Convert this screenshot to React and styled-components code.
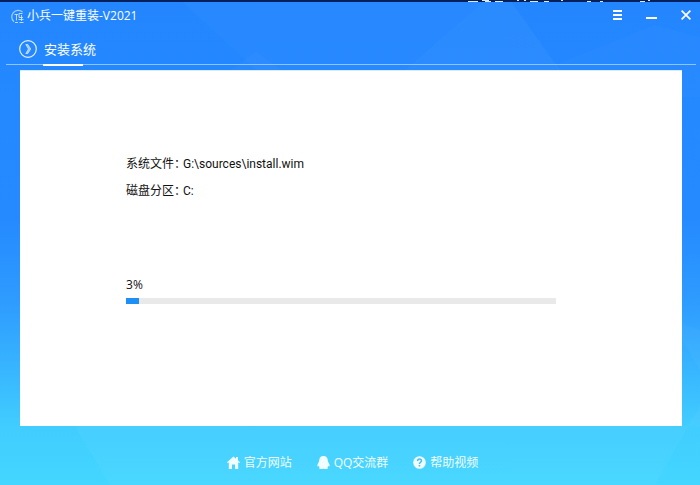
import React from 'react';
import styled, { createGlobalStyle } from 'styled-components';

const GlobalStyle = createGlobalStyle`
  * { box-sizing: border-box; }
  body {
    margin: 0;
    font-family: "Open Sans", "Noto Sans", "Noto Sans CJK SC", sans-serif;
    font-size: 12px;
    color: #111;
  }
`;

const Window = styled.div`
  position: relative;
  isolation: isolate;
  min-height: 100vh;
  display: flex;
  flex-direction: column;
  background: linear-gradient(#2386ff 0%, #258aff 45%, #2e9bff 62%, #36b1ff 74%, #41cdff 88%, #44d6ff 100%);
`;

const Facets = styled.svg`
  position: absolute;
  inset: 0;
  z-index: -1;
  width: 100%;
  height: 100%;
`;

const DesktopEdge = styled.div`
  height: 2px;
  background: #03205c;
  overflow: hidden;
  display: flex;
  justify-content: flex-end;
  padding-right: 44px;
`;

const TitleBar = styled.header`
  height: 28px;
  display: flex;
  align-items: center;
  padding: 0 4px 0 10px;
  color: #fff;
`;

const AppTitle = styled.h1`
  flex: 1;
  margin: 0 0 0 2px;
  font-size: 12px;
  font-weight: 400;
  line-height: 18px;
`;

const Controls = styled.div`
  display: flex;
  gap: 14px;
  padding-bottom: 2px;
`;

const WindowButton = styled.button`
  width: 20px;
  height: 20px;
  padding: 0;
  border: 0;
  background: none;
  color: inherit;
  display: grid;
  place-items: center;
`;

const SectionBar = styled.div`
  display: flex;
  height: 35px;
  margin: 0 4px 0 6px;
  padding-left: 13px;
  border-bottom: 1px solid #8fc5ff;
  color: #fff;
`;

const SectionIcon = styled.svg`
  margin: 10px 6px 0 0;
`;

const SectionTitle = styled.h2`
  margin: 0;
  font-size: 13px;
  font-weight: 400;
  line-height: 20px;
  padding: 9px 0 0 1px;
  height: 36px;
  background: linear-gradient(#fff, #fff) left bottom / 40px 2px no-repeat;
`;

const Panel = styled.main`
  flex: 1;
  margin: 5px 18px 0 20px;
  padding: 83px 126px 0 106px;
  background: #fff;
  border-top: 1px solid #d8ebff;
`;

const Details = styled.dl`
  margin: 0;
  display: grid;
  row-gap: 7px;
`;

const Detail = styled.div`
  display: flex;
  align-items: baseline;
  line-height: 20px;
`;

const Term = styled.dt`
  width: 57px;
  white-space: nowrap;
  font-feature-settings: "halt";
`;

const Value = styled.dd`
  margin: 0;
  font-family: Roboto, "Noto Sans CJK SC", sans-serif;
`;

const Progress = styled.section`
  margin-top: 74px;
`;

const Percent = styled.label`
  display: block;
  line-height: 20px;
`;

const Bar = styled.progress`
  appearance: none;
  display: block;
  width: 100%;
  height: 6px;
  margin-top: 3px;
  border: 0;
  background: #e9e9e9;
  &::-webkit-progress-bar { background: #e9e9e9; }
  &::-webkit-progress-value { background: #1e90f5; }
`;

const Footer = styled.footer`
  height: 59px;
  display: flex;
  justify-content: center;
  align-items: center;
  gap: 25px;
  padding: 14px 0 0 5px;
`;

const FooterLink = styled.a`
  display: flex;
  align-items: center;
  gap: 4px;
  color: #f2fdff;
  font-size: 12px;
  line-height: 18px;
  text-decoration: none;
  white-space: nowrap;
`;

const HomeIcon = () => (
  <svg width="13" height="13" viewBox="0 0 13 13" fill="currentColor" aria-hidden="true">
    <path d="M6.500 .5 0 6.200l.7.900 1.100-.8V13H5V8.500h3V13h3.200V6.300l1.100.8.7-.9-2-1.800V1H9v1.700z" />
  </svg>
);

const PenguinIcon = () => (
  <svg width="13" height="13" viewBox="0 0 13 13" fill="currentColor" aria-hidden="true">
    <path d="M6.500 0C3.700 0 2.200 1.900 2.200 4.600c0 .9-.4 1.500-1 2.300C.3 8.300.1 10.300.7 10.500c.4.100.8-.2 1.100-.7.2.7.500 1.200.9 1.500-.6.300-.8.600-.7 1 .4.900 3.700.9 4.500.1.800.8 4.100.8 4.500-.1.100-.4-.1-.7-.7-1 .4-.3.700-.8.9-1.500.3.500.7.800 1.100.7.600-.2.400-2.200-.5-3.600-.6-.8-1-1.400-1-2.300C10.800 1.900 9.300 0 6.500 0z" />
  </svg>
);

const HelpIcon = () => (
  <svg width="13" height="13" viewBox="0 0 13 13" fill="none" aria-hidden="true">
    <circle cx="6.500" cy="6.500" r="6.300" fill="currentColor" />
    <path d="M4.600 5C4.600 2.500 8.500 2.500 8.500 4.800 8.500 6.200 6.500 6.300 6.500 7.900M6.500 9v1.400" stroke="#3dbef5" strokeWidth="1.500" />
  </svg>
);

const Logo = () => (
  <svg width="15" height="15" viewBox="0 0 15 15" fill="none" stroke="#d3e7ff" aria-hidden="true">
    <path d="M12.500 3A6.300 6.300 0 1 0 4 12.800" strokeWidth="1.200" opacity=".75" />
    <path d="M4.500 5.500h3.500M6.500 5.500v6M9 4.500h3.500M9 4.500v4h4M11.500 6v6M8.500 10.500h5M5 13.500h3M9.500 13.500h4" opacity=".85" />
  </svg>
);

const links = [
  { label: '官方网站', Icon: HomeIcon },
  { label: 'QQ交流群', Icon: PenguinIcon },
  { label: '帮助视频', Icon: HelpIcon },
];

const percent = 3;

export default function App() {
  return (
    <Window>
      <GlobalStyle />
      <Facets viewBox="0 0 700 485" preserveAspectRatio="none" aria-hidden="true">
        <g fill="#fff">
          <path opacity=".035" d="M485 0 405 70h155L510 0z" />
          <path opacity=".02" d="M180 0h305L405 70H256z" />
          <path opacity=".025" d="m256 52-40 28h80z" />
          <path opacity=".02" d="m555 65 100-40 45 12v60h-130z" />
          <path opacity=".03" d="M700 330v40l-30-50zM75 426l35 59h545l45-80v21z" />
        </g>
      </Facets>
      <DesktopEdge>
        <svg width="190" height="2" viewBox="0 0 190 2" stroke="#dce7f5" strokeWidth="1" aria-hidden="true">
          <path d="M2 1.500h10M16 .5h7M19 1.500h6M29 1.500h8M51 .5h2M58 .5h2M64 1.500h8M78 1.500h5M95 .5h2M121 1.500h4M134 1.500h3M174 1.500h5M182 .5h2" />
        </svg>
      </DesktopEdge>
      <TitleBar>
        <Logo />
        <AppTitle>小兵一键重装-V2021</AppTitle>
        <Controls>
          <WindowButton type="button" aria-label="菜单">
            <svg width="10" height="10" fill="currentColor"><path d="M0 0h9v2H0zM0 4h9v2H0zM0 8h9v2H0z" /></svg>
          </WindowButton>
          <WindowButton type="button" aria-label="最小化">
            <svg width="12" height="10" fill="currentColor"><path d="M0 7h11v2H0z" /></svg>
          </WindowButton>
          <WindowButton type="button" aria-label="关闭">
            <svg width="10" height="10" stroke="currentColor" strokeWidth="1.700"><path d="m.6.6 8.800 8.800m0-8.800L.6 9.400" /></svg>
          </WindowButton>
        </Controls>
      </TitleBar>
      <SectionBar>
        <SectionIcon width="18" height="18" viewBox="0 0 18 18" fill="none" stroke="#e5f1ff" aria-hidden="true">
          <circle cx="9" cy="9" r="8.300" strokeWidth="1.200" />
          <path d="m6.800 4.500 2.700 4.500-2.700 4.500h2l2.900-4.500-2.900-4.500z" fill="#9ac9ff" strokeWidth=".7" />
        </SectionIcon>
        <SectionTitle>安装系统</SectionTitle>
      </SectionBar>
      <Panel>
        <Details>
          <Detail><Term>系统文件：</Term><Value>G:\sources\install.wim</Value></Detail>
          <Detail><Term>磁盘分区：</Term><Value>C:</Value></Detail>
        </Details>
        <Progress>
          <Percent htmlFor="install-progress">{percent}%</Percent>
          <Bar id="install-progress" value={percent} max="100" />
        </Progress>
      </Panel>
      <Footer>
        {links.map(({ label, Icon }) => (
          <FooterLink href="#" key={label}><Icon />{label}</FooterLink>
        ))}
      </Footer>
    </Window>
  );
}
